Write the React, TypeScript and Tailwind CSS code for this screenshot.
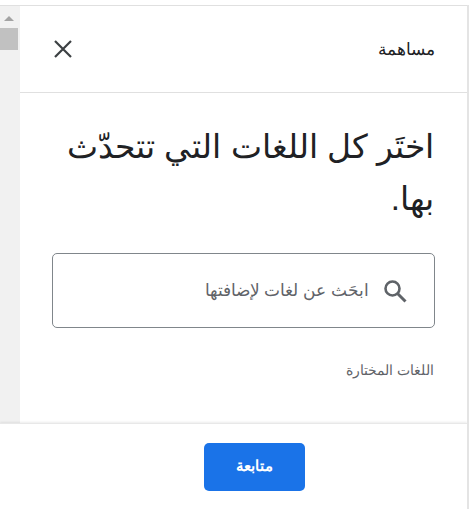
export default function App() {
  return (
    <div className="w-[469px] h-[509px] bg-white flex overflow-hidden font-['Liberation_Sans',Arial,sans-serif]">
      <div className="w-[467px] shrink-0 flex flex-col">
        <div className="h-[5px] shrink-0 bg-white" />
        <div className="h-[418px] shrink-0 flex border-t border-[#e0e0e0]">
          {/* scrollbar */}
          <div className="w-5 shrink-0 bg-[#f1f1f1] flex flex-col">
            <div className="h-[22px] flex items-center justify-center pr-0.5 pt-[3px]">
              <svg width="10" height="6" viewBox="0 0 10 6">
                <path d="M5 0 L10 5 L0 5 Z" fill="#a3a3a3" />
              </svg>
            </div>
            <div className="w-[18px] h-[22px] bg-[#c1c1c1]" />
          </div>
          {/* panel */}
          <div dir="rtl" className="flex-1 bg-white flex flex-col">
            <div className="h-[87px] shrink-0 border-b border-[#e0e0e0] flex items-center justify-between pr-[32px] pl-[34px]">
              <span className="text-[16.5px] text-[#202124]">مساهمة</span>
              <svg width="18" height="18" viewBox="0 0 18 18">
                <path d="M1 1 L17 17 M17 1 L1 17" stroke="#3c4043" strokeWidth="2.2" fill="none" />
              </svg>
            </div>
            <div className="pr-[32px] pl-[32px] pt-[28px]">
              <h1 className="text-[33px] leading-[52px] font-normal text-[#202124] pr-px">اختَر كل اللغات التي تتحدّث بها.</h1>
              <div className="mt-[28px] h-[75px] border border-[#80868b] rounded-[5px] flex items-center pr-[27px]">
                <svg width="24" height="24" viewBox="0 0 24 24" fill="none">
                  <circle cx="9.5" cy="9.5" r="7" stroke="#5f6368" strokeWidth="2.6" />
                  <path d="M14.5 14.5 L22.5 22.5" stroke="#5f6368" strokeWidth="3" />
                </svg>
                <span className="mr-[14px] text-[17.2px] text-[#5f6368]">ابحَث عن لغات لإضافتها</span>
              </div>
              <p className="mt-[33px] pr-px text-[13.5px] text-[#5f6368]">اللغات المختارة</p>
            </div>
          </div>
        </div>
        {/* footer */}
        <div className="flex-1 bg-white border-t border-[#e8e8e8] shadow-[0_-1px_2px_rgba(0,0,0,0.08)] flex justify-center pt-[19px]">
          <button dir="rtl" className="w-[101px] h-[48px] ml-[41px] bg-[#1a73e8] text-white text-[14.5px] font-bold rounded-[5px]">متابعة</button>
        </div>
      </div>
      <div className="w-0.5 shrink-0 mt-[5px] bg-[#e4e4e4]" />
    </div>
  );
}
